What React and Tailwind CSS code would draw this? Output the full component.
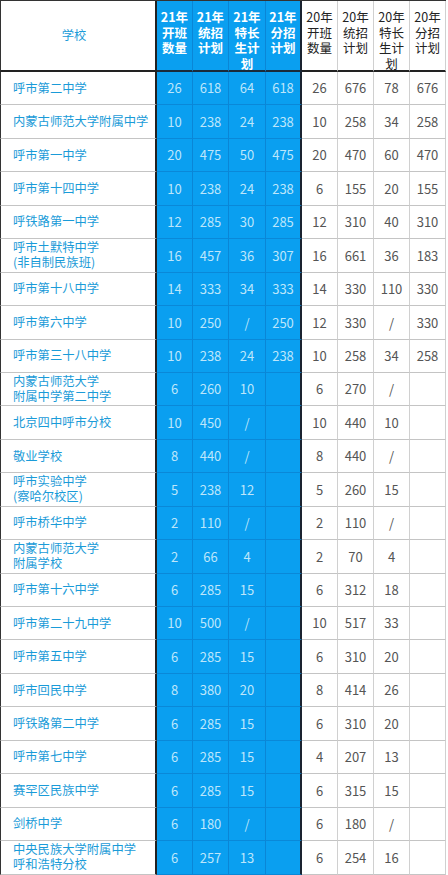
import React from "react";

const rows = [
  ["呼市第二中学", ["26", "618", "64", "618"], ["26", "676", "78", "676"]],
  ["内蒙古师范大学附属中学", ["10", "238", "24", "238"], ["10", "258", "34", "258"]],
  ["呼市第一中学", ["20", "475", "50", "475"], ["20", "470", "60", "470"]],
  ["呼市第十四中学", ["10", "238", "24", "238"], ["6", "155", "20", "155"]],
  ["呼铁路第一中学", ["12", "285", "30", "285"], ["12", "310", "40", "310"]],
  ["呼市土默特中学\n(非自制民族班)", ["16", "457", "36", "307"], ["16", "661", "36", "183"]],
  ["呼市第十八中学", ["14", "333", "34", "333"], ["14", "330", "110", "330"]],
  ["呼市第六中学", ["10", "250", "/", "250"], ["12", "330", "/", "330"]],
  ["呼市第三十八中学", ["10", "238", "24", "238"], ["10", "258", "34", "258"]],
  ["内蒙古师范大学\n附属中学第二中学", ["6", "260", "10", ""], ["6", "270", "/", ""]],
  ["北京四中呼市分校", ["10", "450", "/", ""], ["10", "440", "10", ""]],
  ["敬业学校", ["8", "440", "/", ""], ["8", "440", "/", ""]],
  ["呼市实验中学\n(察哈尔校区)", ["5", "238", "12", ""], ["5", "260", "15", ""]],
  ["呼市桥华中学", ["2", "110", "/", ""], ["2", "110", "/", ""]],
  ["内蒙古师范大学\n附属学校", ["2", "66", "4", ""], ["2", "70", "4", ""]],
  ["呼市第十六中学", ["6", "285", "15", ""], ["6", "312", "18", ""]],
  ["呼市第二十九中学", ["10", "500", "/", ""], ["10", "517", "33", ""]],
  ["呼市第五中学", ["6", "285", "15", ""], ["6", "310", "20", ""]],
  ["呼市回民中学", ["8", "380", "20", ""], ["8", "414", "26", ""]],
  ["呼铁路第二中学", ["6", "285", "15", ""], ["6", "310", "20", ""]],
  ["呼市第七中学", ["6", "285", "15", ""], ["4", "207", "13", ""]],
  ["赛罕区民族中学", ["6", "285", "15", ""], ["6", "315", "15", ""]],
  ["剑桥中学", ["6", "180", "/", ""], ["6", "180", "/", ""]],
  ["中央民族大学附属中学\n呼和浩特分校", ["6", "257", "13", ""], ["6", "254", "16", ""]],
];

const h21 = ["21年\n开班\n数量", "21年\n统招\n计划", "21年\n特长\n生计\n划", "21年\n分招\n计划"];
const h20 = ["20年\n开班\n数量", "20年\n统招\n计划", "20年\n特长\n生计\n划", "20年\n分招\n计划"];

const font = { fontFamily: '"Noto Sans CJK SC", "Noto Sans", sans-serif' };

export default function App() {
  return (
    <div className="w-[448px] h-[875px] overflow-hidden bg-white" style={font}>
      <div className="grid grid-cols-[157px_36px_36px_37px_36px_36px_36px_36px_36px] grid-rows-[71px_repeat(24,33.45px)] w-[446px] border-t border-[#333]">
        {/* header */}
        <div className="flex items-center justify-center border-l border-l-[#333] border-r-2 border-r-[#222] border-b-2 border-b-[#222] text-[12.3px] text-[#1a9bd8] pr-[8px]">
          学校
        </div>
        {h21.map((h, i) => (
          <div
            key={"h21" + i}
            className={
              "bg-[#0a9ff0] border-b-2 border-b-[#1a2a3a] text-white font-bold text-[12.5px] leading-[15.5px] text-center pt-[8px] whitespace-pre-line " +
              (i === 3 ? "border-r-2 border-r-[#1a2330]" : "border-r border-r-[#0a86d6]")
            }
          >
            {h}
          </div>
        ))}
        {h20.map((h, i) => (
          <div
            key={"h20" + i}
            className="border-b-2 border-b-[#222] border-r border-r-[#d0d0d0] text-[#222] text-[12.5px] leading-[15.5px] text-center pt-[8px] whitespace-pre-line"
          >
            {h}
          </div>
        ))}
        {/* body */}
        {rows.map(([name, a, b], r) => (
          <React.Fragment key={r}>
            <div className="flex items-center border-l border-l-[#333] border-r-2 border-r-[#222] border-b border-b-[#c4c4c4] pl-[12px] text-[12.3px] leading-[15px] text-[#1a9bd8] whitespace-pre-line">
              {name}
            </div>
            {a.map((v, i) => (
              <div
                key={"a" + i}
                className={
                  "flex items-center justify-center bg-[#0a9ff0] border-b border-b-[#0a88d8] text-[13px] text-[#bde6fb] " +
                  (i === 3 ? "border-r-2 border-r-[#1a2330]" : "border-r border-r-[#0a86d6]")
                }
              >
                {v}
              </div>
            ))}
            {b.map((v, i) => (
              <div
                key={"b" + i}
                className="flex items-center justify-center border-b border-b-[#c4c4c4] border-r border-r-[#d0d0d0] text-[13px] text-[#555]"
              >
                {v}
              </div>
            ))}
          </React.Fragment>
        ))}
      </div>
    </div>
  );
}
